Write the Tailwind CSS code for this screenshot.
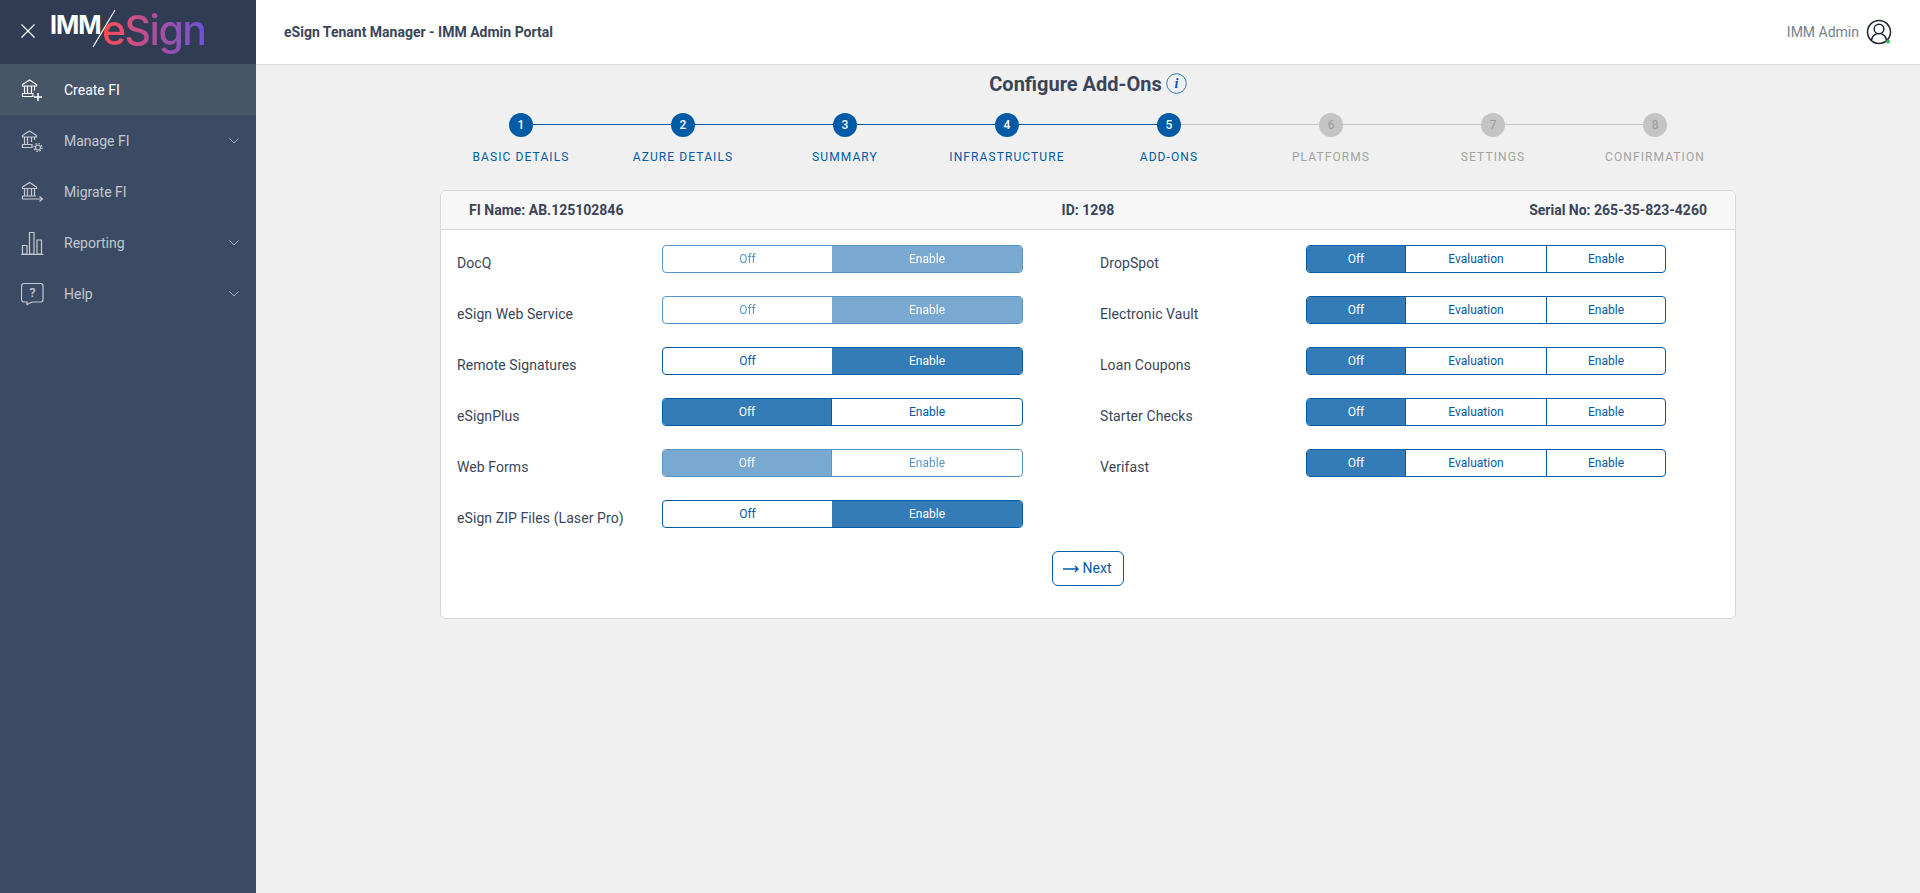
<!DOCTYPE html>
<html lang="en">
<head>
  <meta charset="UTF-8">
  <title>eSign Tenant Manager - IMM Admin Portal</title>
  <script src="https://cdn.jsdelivr.net/npm/@tailwindcss/browser@4"></script>
</head>
<body class="bg-[#f0f0f0] font-[Roboto,sans-serif] text-[#3a4559] h-[893px] overflow-hidden">
<div class="flex h-[893px]">
  <!-- sidebar -->
  <aside class="w-[256px] shrink-0 bg-[#3c4b64] flex flex-col">
    <div class="h-[64px] bg-[#303c54] relative flex items-center pl-[20px]">
      <svg class="-mt-[2px]" width="16" height="16" viewBox="0 0 16 16" fill="none" stroke="#fff" stroke-width="1.2"><path d="M1.5 1.5l13 13M14.5 1.5l-13 13"/></svg>
      <span class="absolute left-[50px] top-[10px] text-[25px] leading-[30px] font-bold text-white font-[Inter,sans-serif] tracking-[-1px]">IMM</span>
      <svg class="absolute left-[91px] top-[9px]" width="26" height="40" viewBox="0 0 26 40" fill="none" stroke="#fff" stroke-width="1.2"><path d="M24 1L2 38"/></svg>
      <span class="absolute left-[102px] top-[5px] text-[41px] leading-[50px] font-medium font-[Inter,sans-serif] tracking-[-1.5px] bg-linear-to-r from-[#ff4a4a] via-[#b04d9c] to-[#6a52d6] bg-clip-text text-transparent">eSign</span>
    </div>
    <nav class="text-[14px] text-white/70">
      <a class="h-[51px] flex items-center bg-[#475569] text-white pl-[21px]">
        <svg class="w-[24px] h-[24px] mr-[19px]" viewBox="0 0 24 24" fill="none" stroke="currentColor" stroke-width="1.2"><path d="M1.5 6.5L8.500 2l7 4.500V8h-14zM3.500 8v7.500M6.500 8v7.500M10.500 8v7.500M13.500 8v4.500M1.500 15.500H12v3H1.500z"/><path d="M17 15v8M13 19h8" stroke-width="1.500"/></svg>
        <span class="pt-[1px]">Create FI</span>
      </a>
      <a class="h-[51px] flex items-center pl-[21px] pr-[17px]">
        <svg class="w-[24px] h-[24px] mr-[19px]" viewBox="0 0 24 24" fill="none" stroke="currentColor" stroke-width="1.2"><path d="M1.5 6.500L8.500 2l7 4.500V8h-14zM3.500 8v7.500M6.500 8v7.500M10.500 8v5M13.500 8v3M1.500 15.500H11v3H1.500z"/><circle cx="17" cy="18.500" r="2.500"/><circle cx="17" cy="18.500" r="4" stroke-dasharray="1.500 1.640"/></svg>
        <span class="pt-[1px]">Manage FI</span>
        <svg class="ml-auto" width="10" height="6" viewBox="0 0 10 6" fill="none" stroke="currentColor" stroke-width="0.800"><path d="M0.500 0.500L5 5l4.500-4.500"/></svg>
      </a>
      <a class="h-[51px] flex items-center pl-[21px]">
        <svg class="w-[24px] h-[24px] mr-[19px]" viewBox="0 0 24 24" fill="none" stroke="currentColor" stroke-width="1.2"><path d="M1.5 7L8.500 2.500l7 4.500v1.500h-14zM3.500 8.500v7.500M6.500 8.500v7.500M10.500 8.500v7.500M13.500 8.500v7.500M1.500 16H15M1.500 16v3H21M18.500 16.500L21.500 19l-3 2.500"/></svg>
        <span class="pt-[1px]">Migrate FI</span>
      </a>
      <a class="h-[51px] flex items-center pl-[21px] pr-[17px]">
        <svg class="w-[24px] h-[24px] mr-[19px]" viewBox="0 0 24 24" fill="none" stroke="currentColor" stroke-width="1.2"><path d="M0 23.500h22.500M1.500 23v-8.500h4.500V23zM8.500 23V1.500H13V23zM16 23V9h4.500v14z"/></svg>
        <span class="pt-[1px]">Reporting</span>
        <svg class="ml-auto" width="10" height="6" viewBox="0 0 10 6" fill="none" stroke="currentColor" stroke-width="0.800"><path d="M0.500 0.500L5 5l4.500-4.500"/></svg>
      </a>
      <a class="h-[51px] flex items-center pl-[21px] pr-[17px]">
        <svg class="w-[24px] h-[24px] mr-[19px]" viewBox="0 0 24 24" fill="none" stroke="currentColor" stroke-width="1.2"><path d="M3 1.500h16.500a2.500 2.500 0 0 1 2.500 2.500v13.500a2.500 2.500 0 0 1-2.500 2.500H11l-5 2.500V20H3a2.500 2.500 0 0 1-2.500-2.500V4A2.500 2.500 0 0 1 3 1.500z"/><text x="11.300" y="15" text-anchor="middle" font-family="Roboto" font-size="13" font-weight="500" fill="currentColor" stroke="none">?</text></svg>
        <span class="pt-[1px]">Help</span>
        <svg class="ml-auto" width="10" height="6" viewBox="0 0 10 6" fill="none" stroke="currentColor" stroke-width="0.800"><path d="M0.500 0.500L5 5l4.500-4.500"/></svg>
      </a>
    </nav>
  </aside>

  <div class="flex-1 min-w-0 flex flex-col">
    <!-- header -->
    <header class="h-[65px] bg-white border-b border-[#d8dbe0] flex items-center pl-[28px] pr-[28px]">
      <span class="text-[14px] font-bold">eSign Tenant Manager - IMM Admin Portal</span>
      <span class="ml-auto text-[14px] text-[#768192]">IMM Admin</span>
      <svg class="ml-[7px]" width="26" height="26" viewBox="0 0 26 26" fill="none" stroke="#1f2430" stroke-width="1.500"><circle cx="13" cy="13" r="11.500"/><circle cx="13" cy="10" r="4.800"/><path d="M5.500 21.500c.5-4 3-6 5-6.500M20.500 21.500c-.5-4-3-6-5-6.500"/><circle cx="22" cy="22.500" r="2" fill="#2eb85c" stroke="none"/></svg>
    </header>

    <!-- content -->
    <main class="w-[1296px] ml-[184px]">
      <div class="h-[38px] flex items-center justify-center text-[20px] font-bold">
        <span>Configure Add-Ons</span>
        <svg class="ml-[4px] -mt-[2px]" width="21" height="21" viewBox="0 0 21 21"><circle cx="10.500" cy="10.500" r="9.800" fill="none" stroke="#005ba6" stroke-width="0.800"/><text x="10.500" y="15" text-anchor="middle" font-family="Liberation Serif" font-style="italic" font-size="14" font-weight="700" fill="#005ba6">i</text></svg>
      </div>

      <!-- stepper -->
      <ol class="grid grid-cols-8 mt-[10px] h-[75px] text-[12px] tracking-[1.1px] uppercase">
        <li class="relative flex flex-col items-center text-[#005ba6]">
          <span class="absolute left-1/2 w-full top-[11px] h-px bg-[#005ba6]"></span>
          <span class="relative z-10 w-[24px] h-[24px] rounded-full bg-[#005ba6] text-white text-[12px] font-medium tracking-normal flex items-center justify-center">1</span>
          <span class="mt-[11px]">Basic Details</span>
        </li>
        <li class="relative flex flex-col items-center text-[#005ba6]">
          <span class="absolute left-1/2 w-full top-[11px] h-px bg-[#005ba6]"></span>
          <span class="relative z-10 w-[24px] h-[24px] rounded-full bg-[#005ba6] text-white text-[12px] font-medium tracking-normal flex items-center justify-center">2</span>
          <span class="mt-[11px]">Azure Details</span>
        </li>
        <li class="relative flex flex-col items-center text-[#005ba6]">
          <span class="absolute left-1/2 w-full top-[11px] h-px bg-[#005ba6]"></span>
          <span class="relative z-10 w-[24px] h-[24px] rounded-full bg-[#005ba6] text-white text-[12px] font-medium tracking-normal flex items-center justify-center">3</span>
          <span class="mt-[11px]">Summary</span>
        </li>
        <li class="relative flex flex-col items-center text-[#005ba6]">
          <span class="absolute left-1/2 w-full top-[11px] h-px bg-[#005ba6]"></span>
          <span class="relative z-10 w-[24px] h-[24px] rounded-full bg-[#005ba6] text-white text-[12px] font-medium tracking-normal flex items-center justify-center">4</span>
          <span class="mt-[11px]">Infrastructure</span>
        </li>
        <li class="relative flex flex-col items-center text-[#005ba6]">
          <span class="absolute left-1/2 w-full top-[11px] h-px bg-[#c4c4c4]"></span>
          <span class="relative z-10 w-[24px] h-[24px] rounded-full bg-[#005ba6] text-white text-[12px] font-medium tracking-normal flex items-center justify-center">5</span>
          <span class="mt-[11px]">Add-Ons</span>
        </li>
        <li class="relative flex flex-col items-center text-[#a3a3a3]">
          <span class="absolute left-1/2 w-full top-[11px] h-px bg-[#c4c4c4]"></span>
          <span class="relative z-10 w-[24px] h-[24px] rounded-full bg-[#c4c4c4] text-[#999] text-[12px] tracking-normal flex items-center justify-center">6</span>
          <span class="mt-[11px]">Platforms</span>
        </li>
        <li class="relative flex flex-col items-center text-[#a3a3a3]">
          <span class="absolute left-1/2 w-full top-[11px] h-px bg-[#c4c4c4]"></span>
          <span class="relative z-10 w-[24px] h-[24px] rounded-full bg-[#c4c4c4] text-[#999] text-[12px] tracking-normal flex items-center justify-center">7</span>
          <span class="mt-[11px]">Settings</span>
        </li>
        <li class="relative flex flex-col items-center text-[#a3a3a3]">
          <span class="relative z-10 w-[24px] h-[24px] rounded-full bg-[#c4c4c4] text-[#999] text-[12px] tracking-normal flex items-center justify-center">8</span>
          <span class="mt-[11px]">Confirmation</span>
        </li>
      </ol>

      <!-- card -->
      <section class="mt-[2px] h-[429px] bg-white border border-[#d8d8d8] rounded-[6px]">
        <div class="h-[39px] bg-[#f7f7f7] border-b border-[#d8d8d8] rounded-t-[6px] grid grid-cols-3 items-center px-[28px] text-[14px] font-bold">
          <span>FI Name: AB.125102846</span>
          <span class="text-center">ID: 1298</span>
          <span class="text-right">Serial No: 265-35-823-4260</span>
        </div>
        <div class="flex pt-[15px] text-[14px] tracking-[0.08px]">
          <div class="w-[659px] pl-[16px]">
            <div class="h-[51px] flex"><span class="w-[205px] pt-[8px]">DocQ</span>
              <div class="flex w-[361px] h-[28px] text-[12px] tracking-normal rounded-[4px] border border-[#005ba6] text-[#005ba6] opacity-[.65]">
                <span class="w-[169px] flex items-center justify-center">Off</span><span class="flex-1 flex items-center justify-center bg-[#337cb7] text-white rounded-r-[3px]">Enable</span>
              </div>
            </div>
            <div class="h-[51px] flex"><span class="w-[205px] pt-[8px]">eSign Web Service</span>
              <div class="flex w-[361px] h-[28px] text-[12px] tracking-normal rounded-[4px] border border-[#005ba6] text-[#005ba6] opacity-[.65]">
                <span class="w-[169px] flex items-center justify-center">Off</span><span class="flex-1 flex items-center justify-center bg-[#337cb7] text-white rounded-r-[3px]">Enable</span>
              </div>
            </div>
            <div class="h-[51px] flex"><span class="w-[205px] pt-[8px]">Remote Signatures</span>
              <div class="flex w-[361px] h-[28px] text-[12px] tracking-normal rounded-[4px] border border-[#005ba6] text-[#005ba6]">
                <span class="w-[169px] flex items-center justify-center">Off</span><span class="flex-1 flex items-center justify-center bg-[#337cb7] text-white rounded-r-[3px]">Enable</span>
              </div>
            </div>
            <div class="h-[51px] flex"><span class="w-[205px] pt-[8px]">eSignPlus</span>
              <div class="flex w-[361px] h-[28px] text-[12px] tracking-normal rounded-[4px] border border-[#005ba6] text-[#005ba6]">
                <span class="w-[169px] flex items-center justify-center bg-[#337cb7] text-white rounded-l-[3px] border-r border-[#005ba6]">Off</span><span class="flex-1 flex items-center justify-center">Enable</span>
              </div>
            </div>
            <div class="h-[51px] flex"><span class="w-[205px] pt-[8px]">Web Forms</span>
              <div class="flex w-[361px] h-[28px] text-[12px] tracking-normal rounded-[4px] border border-[#005ba6] text-[#005ba6] opacity-[.65]">
                <span class="w-[169px] flex items-center justify-center bg-[#337cb7] text-white rounded-l-[3px] border-r border-[#005ba6]">Off</span><span class="flex-1 flex items-center justify-center">Enable</span>
              </div>
            </div>
            <div class="h-[51px] flex"><span class="w-[205px] pt-[8px]">eSign ZIP Files (Laser Pro)</span>
              <div class="flex w-[361px] h-[28px] text-[12px] tracking-normal rounded-[4px] border border-[#005ba6] text-[#005ba6]">
                <span class="w-[169px] flex items-center justify-center">Off</span><span class="flex-1 flex items-center justify-center bg-[#337cb7] text-white rounded-r-[3px]">Enable</span>
              </div>
            </div>
          </div>
          <div>
            <div class="h-[51px] flex"><span class="w-[206px] pt-[8px]">DropSpot</span>
              <div class="flex w-[360px] h-[28px] text-[12px] tracking-normal rounded-[4px] border border-[#005ba6] text-[#005ba6]">
                <span class="w-[99px] flex items-center justify-center bg-[#337cb7] text-white rounded-l-[3px] border-r border-[#005ba6]">Off</span><span class="w-[141px] flex items-center justify-center border-r border-[#005ba6]">Evaluation</span><span class="flex-1 flex items-center justify-center">Enable</span>
              </div>
            </div>
            <div class="h-[51px] flex"><span class="w-[206px] pt-[8px]">Electronic Vault</span>
              <div class="flex w-[360px] h-[28px] text-[12px] tracking-normal rounded-[4px] border border-[#005ba6] text-[#005ba6]">
                <span class="w-[99px] flex items-center justify-center bg-[#337cb7] text-white rounded-l-[3px] border-r border-[#005ba6]">Off</span><span class="w-[141px] flex items-center justify-center border-r border-[#005ba6]">Evaluation</span><span class="flex-1 flex items-center justify-center">Enable</span>
              </div>
            </div>
            <div class="h-[51px] flex"><span class="w-[206px] pt-[8px]">Loan Coupons</span>
              <div class="flex w-[360px] h-[28px] text-[12px] tracking-normal rounded-[4px] border border-[#005ba6] text-[#005ba6]">
                <span class="w-[99px] flex items-center justify-center bg-[#337cb7] text-white rounded-l-[3px] border-r border-[#005ba6]">Off</span><span class="w-[141px] flex items-center justify-center border-r border-[#005ba6]">Evaluation</span><span class="flex-1 flex items-center justify-center">Enable</span>
              </div>
            </div>
            <div class="h-[51px] flex"><span class="w-[206px] pt-[8px]">Starter Checks</span>
              <div class="flex w-[360px] h-[28px] text-[12px] tracking-normal rounded-[4px] border border-[#005ba6] text-[#005ba6]">
                <span class="w-[99px] flex items-center justify-center bg-[#337cb7] text-white rounded-l-[3px] border-r border-[#005ba6]">Off</span><span class="w-[141px] flex items-center justify-center border-r border-[#005ba6]">Evaluation</span><span class="flex-1 flex items-center justify-center">Enable</span>
              </div>
            </div>
            <div class="h-[51px] flex"><span class="w-[206px] pt-[8px]">Verifast</span>
              <div class="flex w-[360px] h-[28px] text-[12px] tracking-normal rounded-[4px] border border-[#005ba6] text-[#005ba6]">
                <span class="w-[99px] flex items-center justify-center bg-[#337cb7] text-white rounded-l-[3px] border-r border-[#005ba6]">Off</span><span class="w-[141px] flex items-center justify-center border-r border-[#005ba6]">Evaluation</span><span class="flex-1 flex items-center justify-center">Enable</span>
              </div>
            </div>
          </div>
        </div>
        <div class="flex justify-center">
          <button class="h-[35px] w-[72px] rounded-[6px] border border-[#005ba6] text-[#005ba6] text-[14px] flex items-center justify-center gap-[4px] pr-[2px]">
            <svg width="16" height="8" viewBox="0 0 16 8" fill="none" stroke="currentColor" stroke-width="1.400"><path d="M0 4h15M12 1l3 3-3 3"/></svg>
            Next
          </button>
        </div>
      </section>
    </main>
  </div>
</div>
</body>
</html>
